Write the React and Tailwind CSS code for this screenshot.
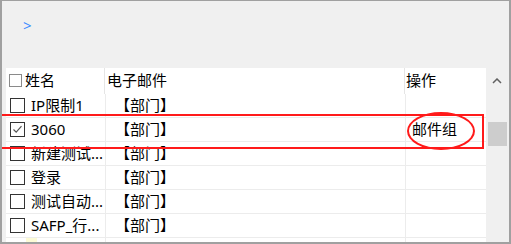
import React from 'react';

const rows = [
  { name: 'IP限制1', email: '【部门】', op: '', checked: false },
  { name: '3060', email: '【部门】', op: '邮件组', checked: true },
  { name: '新建测试...', email: '【部门】', op: '', checked: false },
  { name: '登录', email: '【部门】', op: '', checked: false },
  { name: '测试自动...', email: '【部门】', op: '', checked: false },
  { name: 'SAFP_行...', email: '【部门】', op: '', checked: false },
];

function Checkbox({ checked, small }) {
  return (
    <span
      className={`flex items-center justify-center shrink-0 bg-white border ${
        small ? 'w-[13px] h-[13px] border-[#8a8a8a]' : 'w-[15px] h-[15px] border-[#333333]'
      }`}
    >
      {checked && (
        <svg width="11" height="11" viewBox="0 0 11 11">
          <path d="M1.5 5.5 L4.2 8.2 L9.5 2.2" fill="none" stroke="#555555" strokeWidth="1.2" />
        </svg>
      )}
    </span>
  );
}

export default function App() {
  return (
    <div
      className="relative w-[511px] h-[244px] bg-[#f0f0f0] border-l-2 border-r-2 border-t border-b-2 border-[#a0a0a0] overflow-hidden text-black"
      style={{ fontFamily: '"Noto Sans", "Noto Sans CJK SC", sans-serif' }}
    >
      {/* breadcrumb area */}
      <div className="h-[67px] pl-[21px] pt-[12px]">
        <span className="text-[15px] leading-none text-[#3c8cff]">&gt;</span>
      </div>

      <div className="flex h-[174px]">
        {/* table */}
        <div className="ml-[4px] w-[480px] bg-white flex flex-col text-[15px] leading-none">
          {/* header */}
          <div className="flex h-[26px] shrink-0">
            <div className="w-[99px] flex items-center gap-[3px] pl-[3px] pb-[1px] border-r border-[#e5e5e5]">
              <Checkbox small />
              <span>姓名</span>
            </div>
            <div className="w-[300px] flex items-center pl-[2px] pb-[1px] border-r border-[#e5e5e5]">电子邮件</div>
            <div className="flex-1 flex items-center pl-[1px] pb-[1px]">操作</div>
          </div>

          {rows.map((r, i) => (
            <div key={i} className="flex h-[24px] shrink-0 border-b border-[#ececec]">
              <div className="w-[100px] flex items-center gap-[6px] pl-[4px] border-r border-[#ececec] whitespace-nowrap overflow-hidden">
                <Checkbox checked={r.checked} />
                <span>{r.name}</span>
              </div>
              <div className="w-[300px] flex items-center pl-[9px] border-r border-[#ececec] whitespace-nowrap">{r.email}</div>
              <div className="flex-1 flex items-center pl-[6px] whitespace-nowrap">{r.op}</div>
            </div>
          ))}

          {/* partial row at the bottom */}
          <div className="flex flex-1">
            <div className="w-[100px] pl-[20px] border-r border-[#ececec]">
              <div className="w-[11px] h-[5px] bg-[#fdfbd6]" />
            </div>
            <div className="w-[300px] border-r border-[#ececec]" />
            <div className="flex-1" />
          </div>
        </div>

        {/* scrollbar */}
        <div className="ml-[1px] w-[20px] flex flex-col items-center">
          <svg className="mt-[10px]" width="10" height="6" viewBox="0 0 10 6">
            <path d="M1 5 L5 1 L9 5" fill="none" stroke="#606060" strokeWidth="1.5" />
          </svg>
          <div className="mt-[38px] w-[19px] h-[24px] bg-[#cdcdcd]" />
        </div>
      </div>

      {/* annotations */}
      <div className="absolute left-[-4px] top-[113px] w-[486px] h-[35px] border-2 border-[#ff1a1a]" />
      <div className="absolute left-[405px] top-[111px] w-[68px] h-[38px] border-2 border-[#ff1a1a] rounded-[50%]" />
    </div>
  );
}
